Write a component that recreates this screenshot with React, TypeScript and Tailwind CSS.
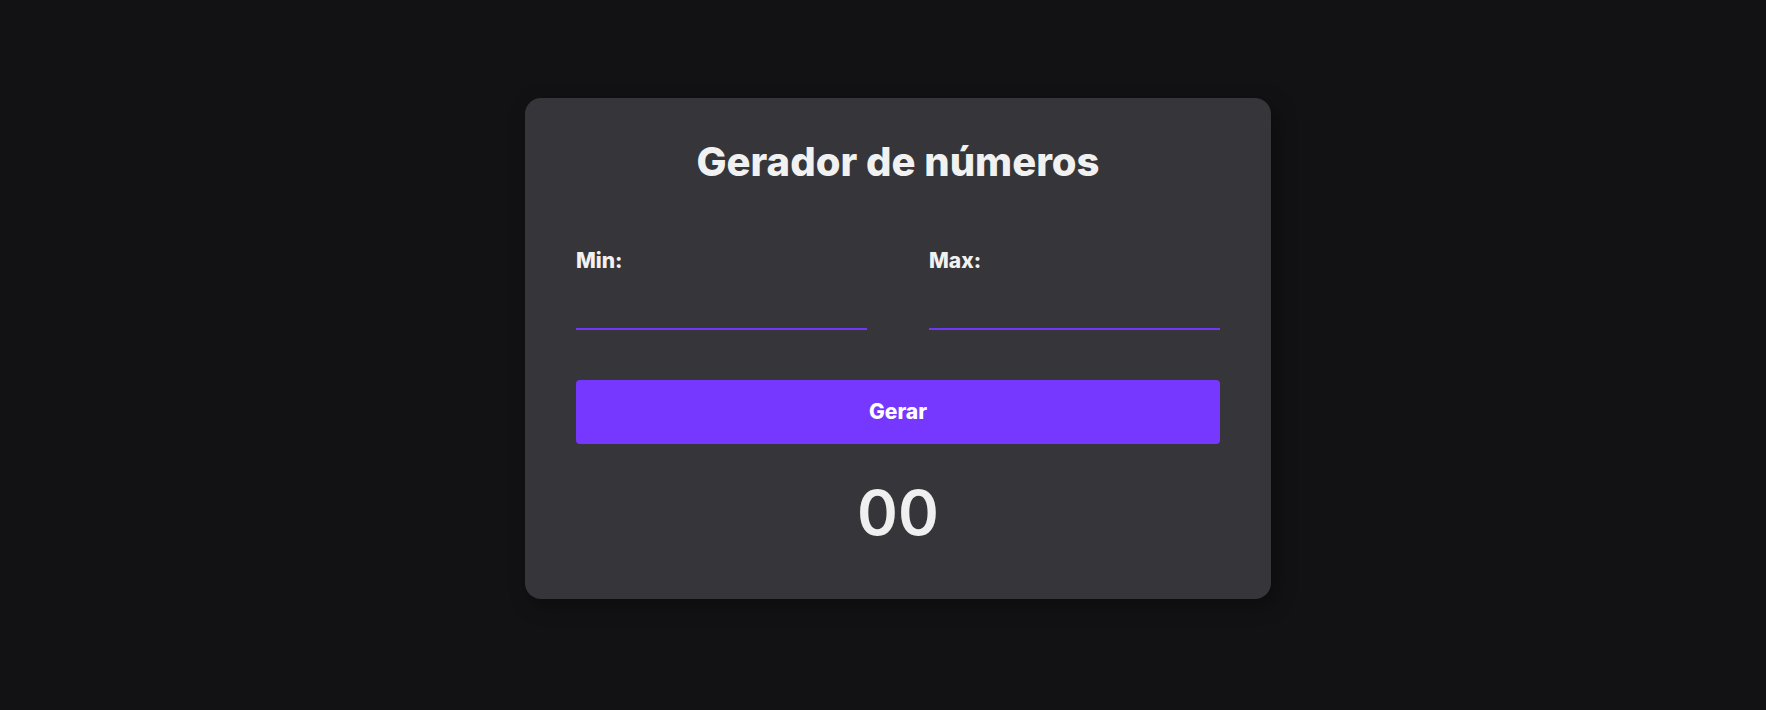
import React, { useState } from "react";

const App = () => {
  const [min, setMin] = useState("");
  const [max, setMax] = useState("");
  const [result, setResult] = useState("00");

  const gerar = () => {
    const a = Number(min);
    const b = Number(max);
    if (Number.isNaN(a) || Number.isNaN(b) || b < a) return;
    const n = Math.floor(Math.random() * (b - a + 1)) + a;
    setResult(String(n).padStart(2, "0"));
  };

  return (
    <main className="min-h-screen w-full bg-[#121214] pt-[98px] pl-[30px] flex justify-center font-['Inter',sans-serif]">
      <section className="w-[746px] h-[501px] rounded-2xl bg-[#363539] px-[51px] pt-[40px] shadow-[5px_6px_20px_rgba(0,0,0,0.35)]">
        <h1 className="text-center text-[40px] leading-[48px] font-extrabold text-[#f1f1f1]">
          Gerador de números
        </h1>

        <div className="mt-[61px] grid grid-cols-2 gap-[62px]">
          <label className="flex flex-col">
            <span className="text-[21px] leading-[28px] font-extrabold text-[#f1f1f1]">Min:</span>
            <input
              type="number"
              value={min}
              onChange={(e) => setMin(e.target.value)}
              className="mt-[15px] h-[40px] bg-transparent border-b-2 border-[#7037f5] text-[#f1f1f1] text-lg outline-none"
            />
          </label>
          <label className="flex flex-col">
            <span className="text-[21px] leading-[28px] font-extrabold text-[#f1f1f1]">Max:</span>
            <input
              type="number"
              value={max}
              onChange={(e) => setMax(e.target.value)}
              className="mt-[15px] h-[40px] bg-transparent border-b-2 border-[#7037f5] text-[#f1f1f1] text-lg outline-none"
            />
          </label>
        </div>

        <button
          onClick={gerar}
          className="mt-[50px] w-full h-[64px] rounded-[4px] bg-[#7638fe] text-white text-[21px] font-extrabold"
        >
          Gerar
        </button>

        <p className="mt-[29px] text-center text-[62px] leading-[80px] font-semibold text-[#efefef]">
          {result}
        </p>
      </section>
    </main>
  );
};

export default App;
